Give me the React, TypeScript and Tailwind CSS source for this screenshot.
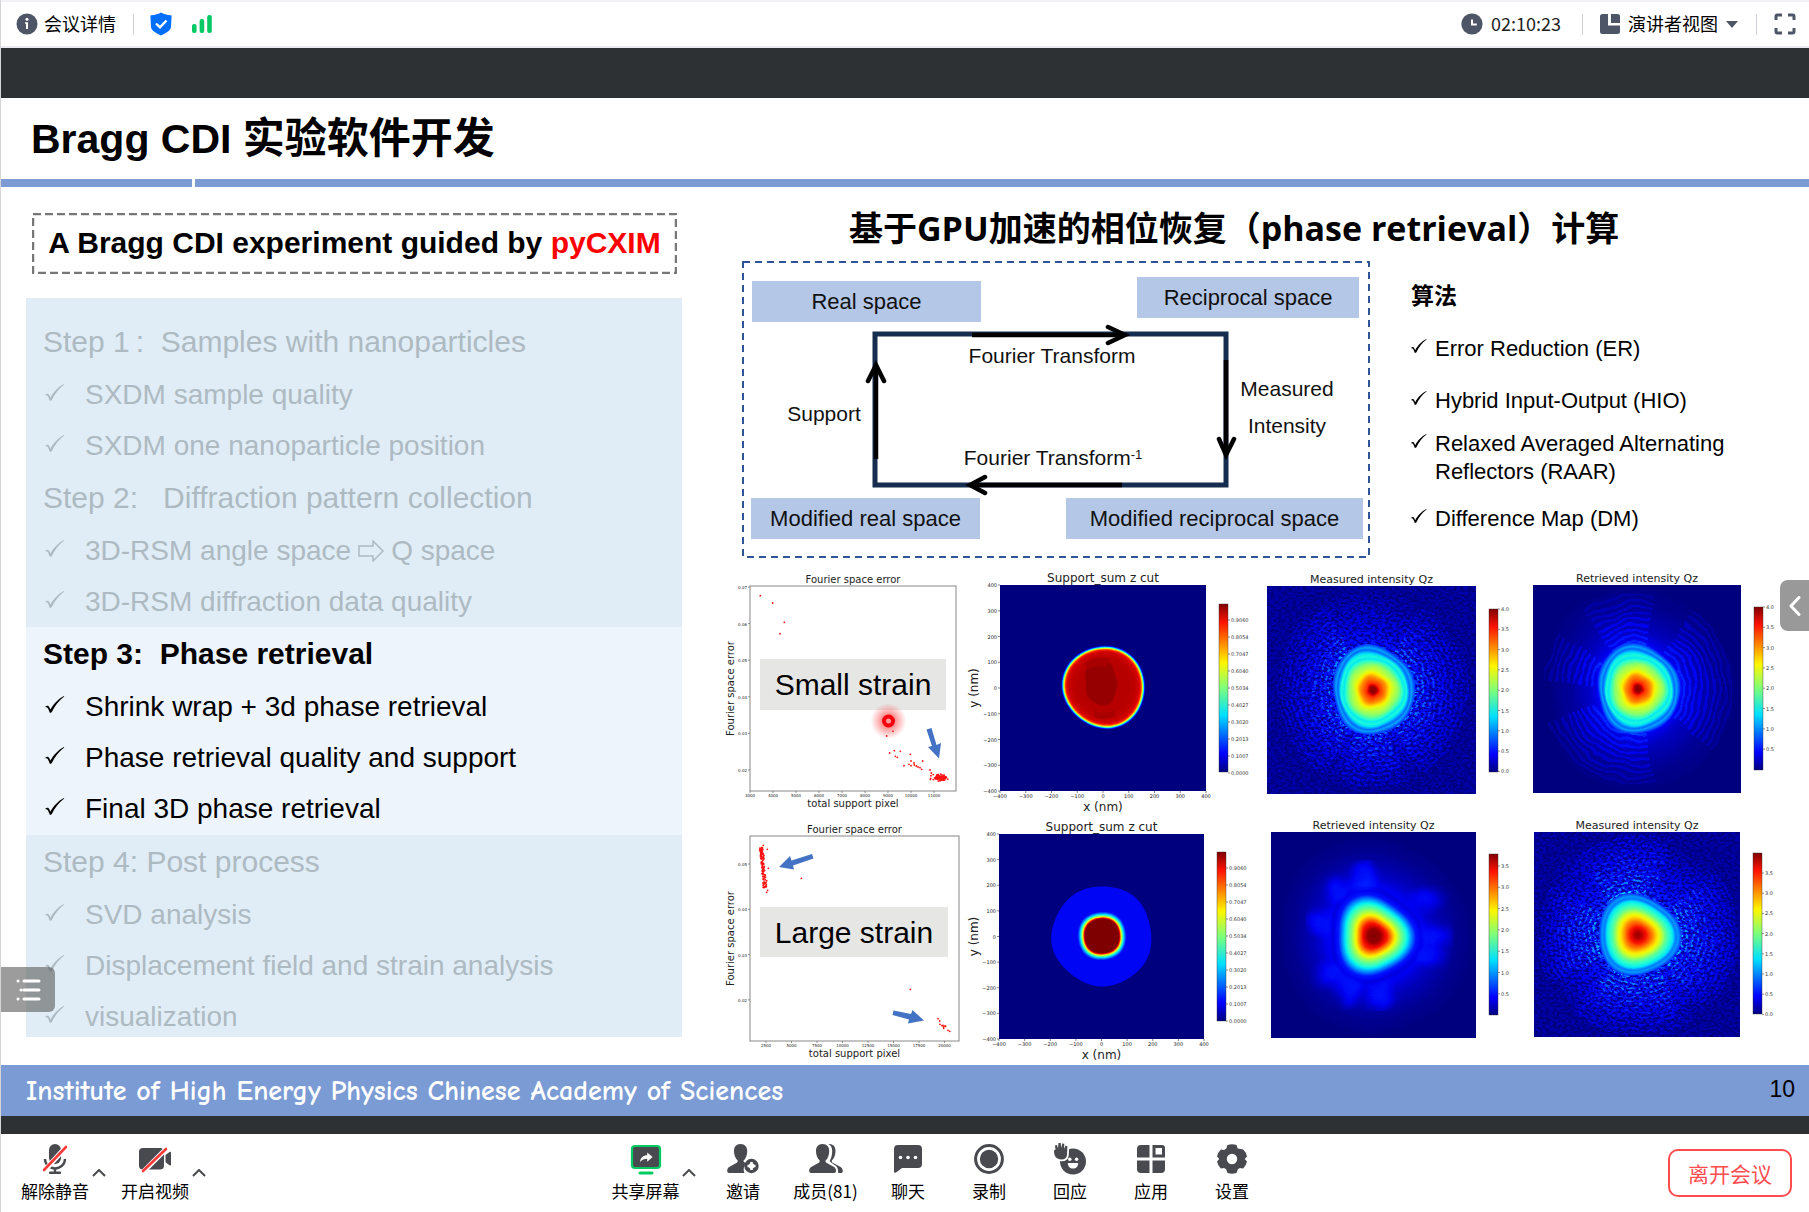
import React from "react";

/* ---------- numeric helpers ---------- */

type Stop = [number, number];

function makeRandom(seed: number) {
  let s = seed;
  return () => {
    s = (s * 1664525 + 1013904223) % 4294967296;
    return s / 4294967296;
  };
}

function valueAt(stops: Stop[], r: number) {
  for (let i = 1; i < stops.length; i++) {
    if (r <= stops[i][0]) {
      const [r0, v0] = stops[i - 1];
      const [r1, v1] = stops[i];
      return v0 + ((v1 - v0) * (r - r0)) / (r1 - r0);
    }
  }
  return stops[stops.length - 1][1];
}

type Harmonic = { n: number; amp: number; phase: number };

function blobPath(cx: number, cy: number, radius: number, harmonics: Harmonic[]) {
  const parts: string[] = [];
  for (let i = 0; i < 72; i++) {
    const t = (i / 72) * Math.PI * 2;
    let k = 1;
    for (const h of harmonics) k += h.amp * Math.cos(h.n * (t - h.phase));
    parts.push(
      `${i ? "L" : "M"}${(cx + radius * k * Math.cos(t)).toFixed(2)} ${(cy + radius * k * Math.sin(t)).toFixed(2)}`
    );
  }
  return parts.join("") + "Z";
}

function gray(v: number) {
  const c = Math.round(Math.max(0, Math.min(1, v)) * 255);
  return `rgb(${c},${c},${c})`;
}

/* ---------- icons ---------- */

const SLATE = "#4e5566";
const INK = "#484a4f";

function CheckMark({ className }: { className: string }) {
  return (
    <svg viewBox="0 0 16 14" className={className} fill="currentColor" aria-hidden="true">
      <path d="M0 8.900C.8 8.100 2 7.700 2.600 8.300 3.200 8.900 3.700 10 4.200 11.200 6.400 6.900 10.700 2.300 15.300 0L15.600.4C11.300 3.500 7.600 8.300 5.300 13.400L3.800 14C3.300 12.500 2.700 11 2.100 10 1.700 9.300 1 9.100.3 9.300Z" />
    </svg>
  );
}

function InfoIcon() {
  return (
    <svg viewBox="0 0 22 22" className="size-[22px]" aria-hidden="true">
      <circle cx="11" cy="11" r="10.500" fill={SLATE} />
      <circle cx="11" cy="6.300" r="1.500" fill="#fff" />
      <path d="M9 9.300h3v6.700h-2v-5.200H9z" fill="#fff" />
    </svg>
  );
}

function ShieldIcon() {
  return (
    <svg viewBox="0 0 22 24" className="h-6 w-[22px]" aria-hidden="true">
      <path d="M11 .5C13 1.900 17 3.100 21 3.300c.4 0 .6.300.6.700L21 15c-.2 3-4.500 6.200-10 8.500C5.500 21.200 1.200 18 1 15L.4 4c0-.4.2-.7.6-.7C5 3.100 9 1.900 11 .5Z" fill="#006fff" />
      <path d="M6 11.500l4 3.800 6.500-6.800" fill="none" stroke="#fff" strokeWidth="2.400" />
    </svg>
  );
}

function SignalIcon() {
  return (
    <svg viewBox="0 0 22 20" className="h-5 w-[22px]" aria-hidden="true" fill="#07c965">
      <rect x="1" y="10" width="4.600" height="9" rx="2" />
      <rect x="8.600" y="5" width="4.600" height="14" rx="2" />
      <rect x="16.200" y="1" width="4.600" height="18" rx="2" />
    </svg>
  );
}

function ClockIcon() {
  return (
    <svg viewBox="0 0 22 22" className="size-[22px]" aria-hidden="true">
      <circle cx="11" cy="11" r="10.600" fill={SLATE} />
      <path d="M11 6.500v5h4.800" fill="none" stroke="#fff" strokeWidth="2" />
    </svg>
  );
}

function LayoutIcon() {
  return (
    <svg viewBox="0 0 20 20" className="size-5" aria-hidden="true" fill={SLATE}>
      <path d="M2.500 0H8v11.500h12V17.500a2.500 2.500 0 0 1-2.500 2.500h-15A2.500 2.500 0 0 1 0 17.500v-15A2.500 2.500 0 0 1 2.500 0Z" />
      <path d="M11 0h6.500A2.500 2.500 0 0 1 20 2.500V9h-9Z" />
    </svg>
  );
}

function FullscreenIcon() {
  return (
    <svg viewBox="0 0 22 22" className="size-[22px]" aria-hidden="true" fill="none" stroke={SLATE} strokeWidth="3">
      <path d="M2 7V3.500Q2 2 3.500 2H8M14 2h4.500Q20 2 20 3.500V7M20 15v3.500q0 1.500-1.500 1.500H14M8 20H3.500Q2 20 2 18.500V15" />
    </svg>
  );
}

function MicOffIcon() {
  return (
    <svg viewBox="0 0 26 32" className="h-8 w-[26px]" aria-hidden="true">
      <rect x="7" y="1" width="12" height="20" rx="6" fill={INK} />
      <path d="M3 16a10 9.500 0 0 0 20 0M13 25.500v4" fill="none" stroke={INK} strokeWidth="2.400" />
      <rect x="7" y="28.400" width="12" height="2.600" rx="1" fill={INK} />
      <path d="M2 28L24 4" stroke="#fff" strokeWidth="5" />
      <path d="M2 27L24 4" stroke="#fe3b3b" strokeWidth="2.600" strokeLinecap="round" />
    </svg>
  );
}

function CameraOffIcon() {
  return (
    <svg viewBox="0 0 32 32" className="size-8" aria-hidden="true">
      <rect x="0" y="5" width="25" height="21.500" rx="4" fill={INK} />
      <path d="M26.500 12l4-3q1.500-.8 1.500.800v11.600q0 1.600-1.500.800l-4-3Z" fill={INK} />
      <path d="M3 30L27 6" stroke="#fff" strokeWidth="5" />
      <path d="M4 28L27 6" stroke="#fe3b3b" strokeWidth="2.600" strokeLinecap="round" />
    </svg>
  );
}

function ShareScreenIcon() {
  return (
    <svg viewBox="0 0 32 32" className="size-8" aria-hidden="true">
      <rect x="2" y="3" width="28" height="22" rx="3" fill={INK} stroke="#00cb62" strokeWidth="2.200" />
      <path d="M10 19c.4-4.600 3.400-6.800 7.200-6.800V9.400l5.400 4.700-5.400 4.700v-3c-3 0-5.200.7-7.200 3.200Z" fill="#fff" />
      <rect x="8.500" y="28.500" width="15" height="3" rx="1.500" fill="#00cb62" />
    </svg>
  );
}

function InviteIcon() {
  return (
    <svg viewBox="0 0 32 30" className="h-[30px] w-8" aria-hidden="true">
      <path d="M13.500 0C18 0 20.200 3 20.200 7c0 4.300-1.700 8-3.500 9.300-.5 1 0 1.700 1 2.200l1.800.9A9 9 0 0 0 17.300 29H2.200C.8 29 0 28 .2 26.500.4 24.500 1 23.500 3 22.500l6.300-3.500c1.200-.7 1.800-1.500 1.200-2.700C8.500 14.500 7 11.300 7 7c0-4 2-7 6.500-7Z" fill={INK} />
      <circle cx="24.500" cy="22" r="5" fill="none" stroke={INK} strokeWidth="4.400" />
      <path d="M24.500 18v8M20.500 22h8" stroke="#fff" strokeWidth="2.600" />
    </svg>
  );
}

function MembersIcon() {
  return (
    <svg viewBox="0 0 36 30" className="h-[30px] w-9" aria-hidden="true" fill={INK}>
      <path d="M14.500 0c4.500 0 6.700 3 6.700 7 0 4.300-1.700 8-3.500 9.300-.5 1.200 0 2 1.200 2.700l6.300 3.500c2 1 2.600 2 2.800 4 .2 1.500-.6 2.500-2 2.500H3.200C1.800 29 1 28 1.200 26.500c.2-2 .8-3 2.800-4l6.300-3.500c1.200-.7 1.800-1.500 1.200-2.700C9.500 14.500 8 11.300 8 7c0-4 2-7 6.500-7Z" />
      <path d="M20.500 0c4.500-.3 7 2.600 7 7 0 4.300-1.500 7.600-3.500 9.300-.5 1.200 0 2 1.200 2.700l6.500 3.500c2 1 2.800 2 3 4 .2 1.500-.2 2.500-1.800 2.500h-2.700c0-4.500-.8-6.500-3.700-8L22.500 18c-1-.5-1-1-.4-1.800C23.400 14 24.200 10.500 24.200 7c0-3.200-1.200-5.500-3.700-7Z" />
    </svg>
  );
}

function ChatIcon() {
  return (
    <svg viewBox="0 0 28 28" className="size-7" aria-hidden="true">
      <path d="M4 0h20a4 4 0 0 1 4 4v15a4 4 0 0 1-4 4H8l-6 4.500q-2 1-2-1V4a4 4 0 0 1 4-4Z" fill={INK} />
      <g fill="#fff">
        <circle cx="6.500" cy="12.500" r="1.800" />
        <circle cx="14" cy="12.500" r="1.800" />
        <circle cx="21.500" cy="12.500" r="1.800" />
      </g>
    </svg>
  );
}

function RecordIcon() {
  return (
    <svg viewBox="0 0 30 30" className="size-[30px]" aria-hidden="true">
      <circle cx="15" cy="15" r="13.400" fill="none" stroke={INK} strokeWidth="3" />
      <circle cx="15" cy="15" r="9.200" fill={INK} />
    </svg>
  );
}

function ReactIcon() {
  return (
    <svg viewBox="0 0 32 32" className="size-8" aria-hidden="true">
      <circle cx="19" cy="18.500" r="13" fill={INK} />
      <path d="M0 7.500L1.800 6.500 1 2.500 3 2 4 5.500 4.500 0h2.200L7.200 5 8.300.4l2 .4L10 6l1.600-3.500 1.800.7L13 12c-.3 3-2.500 4.500-5.500 4.500C2 16.500 0 13 0 7.500Z" fill={INK} stroke="#fff" strokeWidth="3.500" />
      <path d="M0 7.500L1.500 6.500 1 2.500 3 2 4 5.500 4.500 0h2.200L7.200 5 8.300.4l2 .4L10 6l1.600-3.500 1.800.7L13 12c-.3 3-2.500 4.500-5.500 4.500C2 16.500 0 13 0 7.500Z" fill={INK} />
      <circle cx="15.800" cy="16.300" r="1.700" fill="#fff" />
      <circle cx="22.600" cy="16.300" r="1.700" fill="#fff" />
      <path d="M13.800 20h10.400c0 3.500-2 5.500-5.200 5.500s-5.200-2-5.200-5.500Z" fill="#fff" />
    </svg>
  );
}

function AppsIcon() {
  return (
    <svg viewBox="0 0 28 28" className="size-7" aria-hidden="true" fill={INK}>
      <path d="M4 0h8.500v12.500H0V4a4 4 0 0 1 4-4Z" />
      <path d="M0 15.500h12.500V28H4a4 4 0 0 1-4-4Z" />
      <path d="M15.500 15.500H28V24a4 4 0 0 1-4 4h-8.500Z" />
      <path fillRule="evenodd" d="M15.500 0H25a3 3 0 0 1 3 3v9.500H15.500ZM18.500 3v6.500H25V3Z" />
    </svg>
  );
}

function SettingsIcon() {
  return (
    <svg viewBox="0 0 30 30" className="size-[30px]" aria-hidden="true">
      <path
        fillRule="evenodd"
        fill={INK}
        d="M10.500 1q4.500-1.400 9 0l1.200 3.600 3 .4 2.500.6Q29.600 8.800 30 12.500L27.700 15 30 17.500q-.8 4-3.800 7l-3.400-.4-2.100 1.300-1.200 3.600q-4.500 1.400-9 0l-1.200-3.600-2.100-1.300-3.400.4q-3-3-3.800-7L2.300 15 0 12.500q.8-4 3.800-7l3.400.4 2.100-1.300ZM15 9.800a5.200 5.200 0 1 0 0 10.400 5.200 5.200 0 0 0 0-10.400Z"
      />
    </svg>
  );
}

function ChevronUp() {
  return (
    <svg viewBox="0 0 14 8" className="h-2 w-3.5" aria-hidden="true">
      <path d="M1 7l6-6 6 6" fill="none" stroke={INK} strokeWidth="2" />
    </svg>
  );
}

/* ---------- meeting bars ---------- */

function TopBar() {
  return (
    <header className="flex h-12 items-center justify-between border-t-2 border-b-2 border-t-[#f1f2f6] border-b-[#e9ebf1] bg-white pl-[15px] pr-[13px] text-[18px] text-black">
      <div className="flex items-center">
        <button className="flex items-center gap-1.5">
          <InfoIcon />
          <span className="pb-0.5 leading-6">会议详情</span>
        </button>
        <span className="ml-[17px] mr-4 h-[21px] w-px bg-[#cfd1d6]" />
        <button aria-label="安全">
          <ShieldIcon />
        </button>
        <button aria-label="网络" className="ml-[19px]">
          <SignalIcon />
        </button>
      </div>
      <div className="flex items-center">
        <ClockIcon />
        <span className="ml-2 pb-0.5 leading-6 text-[#222]">02:10:23</span>
        <span className="ml-[21px] mr-[17px] h-[21px] w-px bg-[#cfd1d6]" />
        <button className="flex items-center">
          <LayoutIcon />
          <span className="ml-2 pb-0.5 leading-6">演讲者视图</span>
          <svg viewBox="0 0 12 7" className="ml-2 h-[7px] w-3" aria-hidden="true">
            <path d="M0 0h12L6 7Z" fill={SLATE} />
          </svg>
        </button>
        <span className="ml-[18px] mr-[17px] h-[21px] w-px bg-[#cfd1d6]" />
        <button aria-label="全屏">
          <FullscreenIcon />
        </button>
      </div>
    </header>
  );
}

function ToolButton({ label, width, children }: { label: string; width: string; children: React.ReactNode }) {
  return (
    <button className={`flex flex-col items-center ${width}`}>
      <span className="flex h-9 items-center justify-center">{children}</span>
      <span className="mt-0.5 mb-0.5 whitespace-nowrap text-[17px] leading-6">{label}</span>
    </button>
  );
}

function MoreButton({ label }: { label: string }) {
  return (
    <button aria-label={label} className="mb-5 flex h-6 w-[19px] items-center justify-center self-end">
      <ChevronUp />
    </button>
  );
}

function BottomBar() {
  return (
    <footer className="flex items-start justify-between bg-white pt-[7px] pb-[7px] pl-5 pr-[17px] text-black">
      <div className="flex">
        <ToolButton label="解除静音" width="w-[68px]">
          <MicOffIcon />
        </ToolButton>
        <MoreButton label="音频选项" />
        <div className="w-[13px]" />
        <ToolButton label="开启视频" width="w-[68px]">
          <CameraOffIcon />
        </ToolButton>
        <MoreButton label="视频选项" />
      </div>
      <div className="flex pl-2">
        <ToolButton label="共享屏幕" width="w-[68px]">
          <ShareScreenIcon />
        </ToolButton>
        <MoreButton label="共享选项" />
        <div className="w-1" />
        <ToolButton label="邀请" width="w-[81px]">
          <InviteIcon />
        </ToolButton>
        <ToolButton label="成员(81)" width="w-[84px]">
          <MembersIcon />
        </ToolButton>
        <ToolButton label="聊天" width="w-[81px]">
          <ChatIcon />
        </ToolButton>
        <ToolButton label="录制" width="w-[81px]">
          <RecordIcon />
        </ToolButton>
        <ToolButton label="回应" width="w-[81px]">
          <ReactIcon />
        </ToolButton>
        <ToolButton label="应用" width="w-[81px]">
          <AppsIcon />
        </ToolButton>
        <ToolButton label="设置" width="w-[81px]">
          <SettingsIcon />
        </ToolButton>
      </div>
      <button className="mt-2 h-12 rounded-[10px] border-2 border-[#ff4d4f] px-[18px] text-[21px] leading-6 text-[#ff4d4f]">
        离开会议
      </button>
    </footer>
  );
}

/* ---------- left column of the slide ---------- */

function StepHeading({ children, bold }: { children: React.ReactNode; bold?: boolean }) {
  return (
    <h3 className={`flex h-[54px] items-center whitespace-pre text-[30px] leading-9 ${bold ? "font-bold" : ""}`}>{children}</h3>
  );
}

function StepItem({ children }: { children: React.ReactNode }) {
  return (
    <li className="flex h-[51px] items-center whitespace-nowrap text-[28px] leading-9">
      <CheckMark className="mr-5 mb-1 ml-0.5 h-[17px] w-5 shrink-0" />
      {children}
    </li>
  );
}

function Steps() {
  return (
    <div className="mt-6 mr-10 ml-[25px] text-[#aebac2]">
      <section className="bg-[#e0edf6] pt-[17px] pl-[17px]">
        <StepHeading>{"Step 1\u2009:  Samples with nanoparticles"}</StepHeading>
        <ul>
          <StepItem>SXDM sample quality</StepItem>
          <StepItem>SXDM one nanoparticle position</StepItem>
        </ul>
        <StepHeading>{"Step 2:   Diffraction pattern collection"}</StepHeading>
        <ul>
          <StepItem>
            3D-RSM angle space
            <svg viewBox="0 0 26 22" className="mx-[7px] h-[22px] w-[26px]" aria-hidden="true">
              <path d="M1 6h14V1l10 10-10 10v-5H1Z" fill="none" stroke="currentColor" strokeWidth="1.500" />
            </svg>
            Q space
          </StepItem>
          <StepItem>3D-RSM diffraction data quality</StepItem>
        </ul>
      </section>
      <section className="bg-[#edf4fb] pb-px pl-[17px] text-black">
        <StepHeading bold>{"Step 3:  Phase retrieval"}</StepHeading>
        <ul>
          <StepItem>Shrink wrap + 3d phase retrieval</StepItem>
          <StepItem>Phase retrieval quality and support</StepItem>
          <StepItem>Final 3D phase retrieval</StepItem>
        </ul>
      </section>
      <section className="overflow-hidden bg-[#e0edf6] pl-[17px]">
        <StepHeading>Step 4: Post process</StepHeading>
        <ul className="-mb-[5px]">
          <StepItem>SVD analysis</StepItem>
          <StepItem>Displacement field and strain analysis</StepItem>
          <StepItem>visualization</StepItem>
        </ul>
      </section>
    </div>
  );
}

/* ---------- phase retrieval loop diagram ---------- */

function Node({ place, children }: { place: string; children: React.ReactNode }) {
  return (
    <div className={`absolute flex h-[41px] items-center justify-center bg-[#b4c7e7] text-[22px] leading-6 ${place}`}>{children}</div>
  );
}

function Caption({ place, children }: { place: string; children: React.ReactNode }) {
  return <div className={`absolute text-center text-[21px] leading-6 whitespace-nowrap ${place}`}>{children}</div>;
}

function LoopDiagram() {
  return (
    <div className="relative h-[297px] w-[628px] shrink-0 text-[#111]">
      <svg viewBox="742 261 628 297" className="absolute inset-0 size-full" aria-hidden="true" fill="none">
        <rect x="743" y="262" width="626" height="295" stroke="#2f5597" strokeWidth="2" strokeDasharray="7 5" />
        <rect x="875" y="334" width="351" height="151" stroke="#172d4f" strokeWidth="5" />
        <g stroke="#000" strokeWidth="4.500">
          <path d="M972 335H1124M1226 360V454M1122 485H971M876 459V366" />
          <g strokeLinecap="round">
            <path d="M1108 327L1125 335L1108 343M1219 439L1226 455L1234 439M985 477L970 485L985 493M868 381L876 365L884 381" />
          </g>
        </g>
      </svg>
      <Node place="left-[10px] top-[20px] w-[229px]">Real space</Node>
      <Node place="left-[395px] top-[16px] w-[222px]">Reciprocal space</Node>
      <Node place="left-[9px] top-[237px] w-[229px]">Modified real space</Node>
      <Node place="left-[324px] top-[237px] w-[297px]">Modified reciprocal space</Node>
      <Caption place="left-[210px] top-[83px] w-[200px]">Fourier Transform</Caption>
      <Caption place="left-[211px] top-[185px] w-[200px]">
        Fourier Transform<sup className="text-[13px]">-1</sup>
      </Caption>
      <Caption place="left-[40px] top-[141px] w-[84px]">Support</Caption>
      <Caption place="left-[495px] top-[116px] w-[100px]">Measured</Caption>
      <Caption place="left-[495px] top-[153px] w-[100px]">Intensity</Caption>
    </div>
  );
}

function Algorithms() {
  const item = "flex text-[22px] leading-7";
  const tick = "mt-1 mr-2 h-[14px] w-4 shrink-0";
  return (
    <div className="ml-[41px] pt-[19px] text-black">
      <h3 className="text-[23px] font-bold leading-8">算法</h3>
      <ul>
        <li className={`mt-[23px] ${item}`}>
          <CheckMark className={tick} />
          Error Reduction (ER)
        </li>
        <li className={`mt-6 ${item}`}>
          <CheckMark className={tick} />
          Hybrid Input-Output (HIO)
        </li>
        <li className={`mt-[15px] ${item}`}>
          <CheckMark className={tick} />
          <span>
            Relaxed Averaged Alternating
            <br />
            Reflectors (RAAR)
          </span>
        </li>
        <li className={`mt-[19px] ${item}`}>
          <CheckMark className={tick} />
          Difference Map (DM)
        </li>
      </ul>
    </div>
  );
}

/* ---------- plots ---------- */

const PLOT_FONT = '"DejaVu Sans", sans-serif';

function PlotDefs() {
  return (
    <svg className="absolute size-0" aria-hidden="true">
      <defs>
        <filter id="jet" x="0" y="0" width="1" height="1" colorInterpolationFilters="sRGB">
          <feGaussianBlur stdDeviation="0.700" edgeMode="duplicate" />
          <feComponentTransfer>
            <feFuncR type="table" tableValues="0 0 0 0 0 0 0 0 .16 .32 .48 .65 .81 .97 1 1 1 1 .95 .73 .5" />
            <feFuncG type="table" tableValues="0 0 0 .1 .3 .5 .7 .9 1 1 1 1 1 .96 .78 .59 .41 .22 .04 0 0" />
            <feFuncB type="table" tableValues=".5 .73 .95 1 1 1 1 .97 .81 .65 .48 .32 .16 0 0 0 0 0 0 0 0" />
          </feComponentTransfer>
        </filter>
        <filter id="grain" x="0" y="0" width="1" height="1" colorInterpolationFilters="sRGB">
          <feTurbulence type="fractalNoise" baseFrequency="0.280 0.400" numOctaves="2" seed="7" result="n" />
          <feColorMatrix in="n" type="matrix" values="4 0 0 0 -1.450 4 0 0 0 -1.450 4 0 0 0 -1.450 0 0 0 0 1" result="g" />
          <feComposite in="SourceGraphic" in2="g" operator="arithmetic" k1="0.950" k2="0.250" k3="0.025" k4="-0.010" />
        </filter>
        <filter id="warp" x="0" y="0" width="1" height="1" colorInterpolationFilters="sRGB">
          <feTurbulence type="fractalNoise" baseFrequency="0.045" numOctaves="2" seed="3" result="n" />
          <feDisplacementMap in="SourceGraphic" in2="n" scale="9" xChannelSelector="R" yChannelSelector="G" />
        </filter>
        <filter id="soften" x="-0.200" y="-0.200" width="1.400" height="1.400">
          <feGaussianBlur stdDeviation="6" />
        </filter>
        <linearGradient id="jetBar" x1="0" y1="1" x2="0" y2="0">
          <stop offset="0" stopColor="#000080" />
          <stop offset="0.110" stopColor="#0000ff" />
          <stop offset="0.340" stopColor="#00e0ff" />
          <stop offset="0.500" stopColor="#7dff7a" />
          <stop offset="0.650" stopColor="#fff600" />
          <stop offset="0.890" stopColor="#ff1300" />
          <stop offset="1" stopColor="#800000" />
        </linearGradient>
        <radialGradient id="pointerGlow">
          <stop offset="0.300" stopColor="#ff2020" stopOpacity="0.550" />
          <stop offset="1" stopColor="#ff4040" stopOpacity="0" />
        </radialGradient>
      </defs>
    </svg>
  );
}

type Box = { x: number; y: number; w: number; h: number };

function ColorBar({ x, y, h, ticks }: { x: number; y: number; h: number; ticks: { y: number; t: string }[] }) {
  return (
    <g>
      <rect x={x} y={y} width="9" height={h} fill="url(#jetBar)" stroke="#333" strokeWidth="0.400" />
      {ticks.map((k) => (
        <g key={k.t}>
          <path d={`M${x + 9} ${k.y}h2`} stroke="#444" strokeWidth="0.600" />
          <text x={x + 12} y={k.y + 2} fontSize="5" fill="#333">
            {k.t}
          </text>
        </g>
      ))}
    </g>
  );
}

function ScatterPlot({
  view, frame, titleY, xTicks, yTicks, points, label, labelBox, children,
}: {
  view: string;
  frame: Box;
  titleY: number;
  xTicks: { x: number; t: string }[];
  yTicks: { y: number; t: string }[];
  points: [number, number][];
  label: string;
  labelBox: Box;
  children?: React.ReactNode;
}) {
  const cx = frame.x + frame.w / 2;
  const bottom = frame.y + frame.h;
  return (
    <svg viewBox={view} className="block h-auto w-full" fontFamily={PLOT_FONT} fill="#222">
      <text x={cx} y={titleY} fontSize="10" textAnchor="middle">Fourier space error</text>
      <rect x={frame.x} y={frame.y} width={frame.w} height={frame.h} fill="none" stroke="#888" strokeWidth="1" />
      {xTicks.map((k) => (
        <g key={k.t}>
          <path d={`M${k.x} ${bottom}v2`} stroke="#555" strokeWidth="0.600" />
          <text x={k.x} y={bottom + 6} fontSize="4" textAnchor="middle">{k.t}</text>
        </g>
      ))}
      {yTicks.map((k) => (
        <g key={k.t}>
          <path d={`M${frame.x - 2} ${k.y}h2`} stroke="#555" strokeWidth="0.600" />
          <text x={frame.x - 3} y={k.y + 2} fontSize="4" textAnchor="end">{k.t}</text>
        </g>
      ))}
      <text x={cx} y={bottom + 16} fontSize="10" textAnchor="middle">total support pixel</text>
      <text transform={`translate(734 ${frame.y + frame.h / 2}) rotate(-90)`} fontSize="10" textAnchor="middle">
        Fourier space error
      </text>
      <g fill="#ff1010">
        {points.map(([x, y], i) => (
          <circle key={i} cx={x} cy={y} r="0.900" />
        ))}
      </g>
      <rect x={labelBox.x} y={labelBox.y} width={labelBox.w} height={labelBox.h} fill="#e6e6e5" />
      <text
        x={labelBox.x + labelBox.w / 2}
        y={labelBox.y + 36}
        fontSize="30"
        textAnchor="middle"
        fontFamily={'"Liberation Sans", Arial, sans-serif'}
        fill="#000"
      >
        {label}
      </text>
      {children}
    </svg>
  );
}

const BAR_VALUES = ["0.9060", "0.8054", "0.7047", "0.6040", "0.5034", "0.4027", "0.3020", "0.2013", "0.1007", "0.0000"];
const AXIS_VALUES = [-400, -300, -200, -100, 0, 100, 200, 300, 400];

function SupportPlot({ view, frame, bar, children }: { view: string; frame: Box; bar: { x: number; y: number; h: number }; children: React.ReactNode }) {
  const bottom = frame.y + frame.h;
  return (
    <svg viewBox={view} className="block h-auto w-full" fontFamily={PLOT_FONT} fill="#222">
      <g filter="url(#jet)">
        <rect x={frame.x} y={frame.y} width={frame.w} height={frame.h} fill="#000" />
        {children}
      </g>
      <text x={frame.x + frame.w / 2} y={frame.y - 3} fontSize="12" textAnchor="middle">Support_sum z cut</text>
      {AXIS_VALUES.map((v, i) => (
        <g key={v}>
          <path d={`M${frame.x + (frame.w * i) / 8} ${bottom}v2M${frame.x - 2} ${bottom - (frame.h * i) / 8}h2`} stroke="#333" strokeWidth="0.600" />
          <text x={frame.x + (frame.w * i) / 8} y={bottom + 7} fontSize="5" textAnchor="middle">{String(v).replace("-", "−")}</text>
          <text x={frame.x - 3} y={bottom - (frame.h * i) / 8 + 2} fontSize="5" textAnchor="end">{String(v).replace("-", "−")}</text>
        </g>
      ))}
      <text x={frame.x + frame.w / 2} y={bottom + 20} fontSize="12" textAnchor="middle">x (nm)</text>
      <text transform={`translate(978 ${frame.y + frame.h / 2}) rotate(-90)`} fontSize="12" textAnchor="middle">y (nm)</text>
      <ColorBar x={bar.x} y={bar.y} h={bar.h} ticks={BAR_VALUES.map((t, i) => ({ t, y: bar.y + 16 + i * 17 }))} />
    </svg>
  );
}

function Levels({ cx, cy, from, to, step, stops, shape }: { cx: number; cy: number; from: number; to: number; step: number; stops: Stop[]; shape: (r: number) => Harmonic[] }) {
  const radii: number[] = [];
  for (let r = from; r >= to; r -= step) radii.push(r);
  return (
    <>
      {radii.map((r) => (
        <path key={r} d={blobPath(cx, cy, r, shape(r))} fill={gray(valueAt(stops, r))} />
      ))}
    </>
  );
}

function Arcs({ cx, cy, start, end, gap, opacity, spans }: { cx: number; cy: number; start: number; end: number; gap: number; opacity: number; spans: [number, number][] }) {
  const out: React.ReactNode[] = [];
  for (let r = start; r < end; r += gap) {
    for (const [a, b] of spans) {
      const p = (deg: number) => `${(cx + r * Math.cos((deg * Math.PI) / 180)).toFixed(1)} ${(cy + r * Math.sin((deg * Math.PI) / 180)).toFixed(1)}`;
      out.push(
        <path
          key={`${r}-${a}`}
          d={`M${p(a)}A${r} ${r} 0 ${b - a > 180 ? 1 : 0} 1 ${p(b)}`}
          stroke="#fff"
          strokeWidth={gap * 0.45}
          strokeOpacity={opacity * (1 - (0.7 * (r - start)) / (end - start))}
          fill="none"
        />
      );
    }
  }
  return <>{out}</>;
}

function IntensityPlot({
  id, view, frame, title, center, stops, shape, coreRadius, grain, arcs, bar, ticks,
}: {
  id: string;
  view: string;
  frame: Box;
  title: string;
  center: [number, number];
  stops: Stop[];
  shape: (r: number) => Harmonic[];
  coreRadius: number;
  grain: boolean;
  arcs: React.ReactNode;
  bar: { x: number; y: number; h: number };
  ticks: { y: number; t: string }[];
}) {
  const [cx, cy] = center;
  return (
    <svg viewBox={view} className="block h-auto w-full" fontFamily={PLOT_FONT} fill="#222">
      <clipPath id={id}>
        <rect x={frame.x} y={frame.y} width={frame.w} height={frame.h} />
      </clipPath>
      <g clipPath={`url(#${id})`}>
        <g filter="url(#jet)">
          <rect x={frame.x} y={frame.y} width={frame.w} height={frame.h} fill="#000" />
          <g filter={grain ? "url(#grain)" : undefined}>
            <rect x={frame.x} y={frame.y} width={frame.w} height={frame.h} fill={gray(grain ? 0.02 : 0)} />
            <Levels cx={cx} cy={cy} from={103} to={coreRadius - 6} step={1.5} stops={stops} shape={shape} />
            <g filter="url(#warp)">{arcs}</g>
          </g>
          <Levels cx={cx} cy={cy} from={coreRadius} to={1} step={0.75} stops={stops} shape={shape} />
        </g>
      </g>
      <text x={frame.x + frame.w / 2} y={frame.y - 3} fontSize="11" textAnchor="middle">{title}</text>
      <ColorBar x={bar.x} y={bar.y} h={bar.h} ticks={ticks} />
    </svg>
  );
}

const at1 = (x: number, y: number): [number, number] => [715 + x / 3, 565 + y / 3];
const at2 = (x: number, y: number): [number, number] => [715 + x / 3, 815 + y / 3];

function smallStrainPoints() {
  const rnd = makeRandom(11);
  const pts = [
    [136, 92], [173, 114], [208, 172], [195, 206], [534, 499], [515, 513], [524, 564], [538, 557], [556, 559], [586, 568],
    [541, 574], [547, 577], [588, 588], [623, 588], [567, 602], [582, 598], [588, 602], [597, 594], [598, 600], [604, 603],
    [609, 606], [615, 608], [620, 613], [645, 615], [649, 624], [648, 632], [647, 640], [646, 643],
  ].map(([x, y]) => at1(x, y));
  for (let i = 0; i < 80; i++) {
    const dx = (rnd() + rnd() - 1) * 24;
    const dy = (rnd() + rnd() - 1) * 11;
    pts.push(at1(677 + dx, 638 + dy));
  }
  return pts;
}

function largeStrainPoints() {
  const rnd = makeRandom(5);
  const pts = [
    [145, 91], [157, 103], [134, 105], [160, 160], [259, 190], [155, 197], [158, 226], [155, 232], [586, 523], [669, 611], [674, 618],
    [675, 628], [681, 632], [684, 631], [690, 633], [686, 640], [692, 634], [686, 636], [699, 646], [704, 649],
  ].map(([x, y]) => at2(x, y));
  for (let i = 0; i < 110; i++) {
    const t = rnd();
    pts.push(at2(139 + t * 11 + (rnd() - 0.5) * 11, 97 + t * 122));
  }
  return pts;
}

const scale = (values: string[], start: number, step: number) => values.map((t, i) => ({ t, y: start + i * step }));

function Figures() {
  const triangle = (amp: number, phase: number) => (r: number): Harmonic[] => [
    { n: 3, amp: r < 12 ? amp * 0.4 : r > 60 ? 0.02 : amp, phase },
    { n: 2, amp: 0.02, phase: 0.6 },
    { n: 7, amp: r > 46 ? 0.03 : 0, phase: 0.3 },
  ];
  const round = (r: number): Harmonic[] => [
    { n: 2, amp: r > 34 ? 0.05 : 0.02, phase: 1.4 },
    { n: 3, amp: 0.035, phase: 2.1 },
    { n: 5, amp: r > 24 ? 0.015 : 0.03, phase: r * 0.05 },
  ];
  const lobes = (r: number): Harmonic[] => [
    { n: 3, amp: r < 12 ? 0.02 : r > 48 ? 0.02 : 0.08, phase: 0.05 },
    { n: 2, amp: 0.02, phase: 1.2 },
  ];
  const ringed: Stop[] = [
    [0, 1], [4, 0.97], [7, 0.86], [13, 0.76], [16, 0.68], [19, 0.61], [25, 0.52], [28, 0.44], [31, 0.36],
    [34, 0.39], [36, 0.31], [38, 0.23], [40, 0.29], [42, 0.22], [45, 0.12], [60, 0.08], [80, 0.045], [103, 0.015],
  ];
  const halo: [number, number, number, number][] = [
    [1363, 876, 11, 16], [1429, 898, 14, 9], [1437, 936, 16, 8], [1431, 956, 14, 8],
    [1381, 999, 12, 12], [1349, 991, 9, 15], [1328, 975, 12, 9], [1318, 922, 12, 9], [1336, 888, 10, 10],
  ];
  return (
    <div className="relative pr-[33px]">
      <PlotDefs />
      <div className="grid grid-cols-[244fr_290fr_264fr_256fr]">
        <ScatterPlot
          view="722 570 244 250"
          frame={{ x: 750, y: 586, w: 206, h: 205 }}
          titleY={583}
          xTicks={[3000, 4000, 5000, 6000, 7000, 8000, 9000, 10000, 11000].map((t, i) => ({ t: String(t), x: 750 + i * 23 }))}
          yTicks={["0.07", "0.06", "0.05", "0.04", "0.03", "0.02"].map((t, i) => ({ t, y: 587 + i * 36.6 }))}
          points={smallStrainPoints()}
          label="Small strain"
          labelBox={{ x: 760, y: 659, w: 186, h: 51 }}
        >
          <circle cx="888.500" cy="721" r="18" fill="url(#pointerGlow)" />
          <circle cx="888.500" cy="721" r="4.500" fill="#ff9a9a" stroke="#f5000c" strokeWidth="4" />
          <path d="M926.500 729.500L931.500 728L936.500 745L941 743L939 758.500L928 747L932 746Z" fill="#4472c4" />
        </ScatterPlot>
        <SupportPlot view="966 570 290 250" frame={{ x: 1000, y: 585, w: 206, h: 206 }} bar={{ x: 1219, y: 604, h: 168 }}>
          <Levels
            cx={1104}
            cy={687}
            from={42}
            to={20}
            step={0.5}
            stops={[[0, 0.96], [30, 0.95], [36, 0.93], [38, 0.86], [39.5, 0.6], [41, 0.25], [42, 0.05]]}
            shape={() => [{ n: 2, amp: 0.015, phase: 0.7 }, { n: 3, amp: 0.02, phase: 1.2 }]}
          />
          <path d={blobPath(1101, 683, 19, [{ n: 2, amp: 0.18, phase: 1.5 }, { n: 5, amp: 0.04, phase: 0 }])} fill={gray(0.98)} />
          <path d="M1084 664q12-10 26-5l-4 8q-10-3-18 2ZM1094 710q10 6 20 0l2 6q-12 6-22 1Z" fill={gray(0.965)} />
        </SupportPlot>
        <IntensityPlot
          id="clip-a"
          view="1256 570 264 250"
          frame={{ x: 1267, y: 586, w: 209, h: 208 }}
          title="Measured intensity Qz"
          center={[1373, 690]}
          stops={ringed}
          shape={round}
          coreRadius={43}
          grain
          arcs={<Arcs cx={1373} cy={690} start={45} end={100} gap={5} opacity={0.1} spans={[[-60, 60], [120, 240], [70, 110]]} />}
          bar={{ x: 1489, y: 609, h: 163 }}
          ticks={scale(["4.0", "3.5", "3.0", "2.5", "2.0", "1.5", "1.0", "0.5", "0.0"], 609, 20.3)}
        />
        <IntensityPlot
          id="clip-b"
          view="1520 570 256 250"
          frame={{ x: 1533, y: 585, w: 208, h: 208 }}
          title="Retrieved intensity Qz"
          center={[1638, 689]}
          stops={[...ringed.slice(0, 14), [45, 0.1], [55, 0.06], [75, 0.025], [103, 0]] as Stop[]}
          shape={round}
          coreRadius={43}
          grain={false}
          arcs={<Arcs cx={1638} cy={689} start={46} end={98} gap={6} opacity={0.08} spans={[[-55, 40], [80, 160], [185, 215], [235, 280]]} />}
          bar={{ x: 1754, y: 607, h: 163 }}
          ticks={scale(["4.0", "3.5", "3.0", "2.5", "2.0", "1.5", "1.0", "0.5"], 607, 20.3)}
        />
        <ScatterPlot
          view="722 820 244 245"
          frame={{ x: 750, y: 836, w: 209, h: 205 }}
          titleY={833}
          xTicks={[2500, 5000, 7500, 10000, 12500, 15000, 17500, 20000].map((t, i) => ({ t: String(t), x: 766 + i * 25.5 }))}
          yTicks={["0.05", "0.04", "0.03", "0.02"].map((t, i) => ({ t, y: 864 + i * 45.3 }))}
          points={largeStrainPoints()}
          label="Large strain"
          labelBox={{ x: 760, y: 907, w: 188, h: 50 }}
        >
          <path d="M812 854L813.500 858.500L793 865.500L794 869.500L779 867L790 856L791.500 860.500Z" fill="#4472c4" />
          <path d="M893.500 1010.500L892.500 1015L909 1019.500L908 1023.500L924 1020.500L912.500 1010L911 1014Z" fill="#4472c4" />
        </ScatterPlot>
        <SupportPlot view="966 820 290 245" frame={{ x: 999, y: 834, w: 205, h: 205 }} bar={{ x: 1217, y: 852, h: 169 }}>
          <path d={blobPath(1102, 936, 50, [{ n: 5, amp: 0.012, phase: 0.4 }, { n: 3, amp: 0.01, phase: 1 }])} fill={gray(0.11)} />
          <Levels
            cx={1102}
            cy={936}
            from={25}
            to={16}
            step={0.5}
            stops={[[0, 1], [17.5, 1], [18.5, 0.9], [20, 0.6], [22, 0.36], [25, 0.13]]}
            shape={() => [{ n: 4, amp: 0.02, phase: 0.7 }]}
          />
        </SupportPlot>
        <IntensityPlot
          id="clip-c"
          view="1256 820 264 245"
          frame={{ x: 1271, y: 832, w: 205, h: 206 }}
          title="Retrieved intensity Qz"
          center={[1374, 936]}
          stops={[[0, 1], [7, 0.98], [13, 0.88], [18, 0.72], [22, 0.6], [27, 0.47], [32, 0.36], [36, 0.25], [40, 0.14], [46, 0.085], [50, 0.1], [58, 0.065], [72, 0.035], [85, 0.015], [103, 0]]}
          shape={lobes}
          coreRadius={44}
          grain={false}
          arcs={
            <g filter="url(#soften)">
              {halo.map(([x, y, rx, ry]) => (
                <ellipse key={`${x}-${y}`} cx={x} cy={y} rx={rx} ry={ry} fill="#fff" fillOpacity="0.090" />
              ))}
            </g>
          }
          bar={{ x: 1489, y: 854, h: 161 }}
          ticks={scale(["3.5", "3.0", "2.5", "2.0", "1.5", "1.0", "0.5"], 866, 21.3)}
        />
        <IntensityPlot
          id="clip-d"
          view="1520 820 256 245"
          frame={{ x: 1534, y: 832, w: 206, h: 205 }}
          title="Measured intensity Qz"
          center={[1638, 935]}
          stops={[[0, 0.99], [4, 0.95], [9, 0.88], [14, 0.77], [18, 0.68], [22, 0.6], [26, 0.48], [30, 0.4], [33, 0.36], [36, 0.24], [38, 0.28], [41, 0.19], [45, 0.13], [62, 0.1], [85, 0.055], [103, 0.02]]}
          shape={triangle(0.06, 0.05)}
          coreRadius={41}
          grain
          arcs={<Arcs cx={1638} cy={935} start={44} end={100} gap={5} opacity={0.11} spans={[[-40, 50], [60, 130], [150, 210], [230, 290]]} />}
          bar={{ x: 1753, y: 853, h: 161 }}
          ticks={scale(["3.5", "3.0", "2.5", "2.0", "1.5", "1.0", "0.5", "0.0"], 873, 20.2)}
        />
      </div>
    </div>
  );
}

/* ---------- slide ---------- */

function Slide() {
  return (
    <main className="relative flex grow flex-col bg-white font-['Liberation_Sans','Noto_Sans_CJK_SC',sans-serif]">
      <h1 className="pt-[17px] pb-[16px] pl-[30px] text-[41px] leading-[48px] font-bold text-black">
        Bragg CDI <span className="text-[42px]">实验软件开发</span>
      </h1>
      <div className="flex h-2 gap-[3px]">
        <div className="w-[191px] bg-[#7b9bd5]" />
        <div className="grow bg-[#7b9bd5]" />
      </div>
      <div className="grid grow grid-cols-[721fr_1087fr]">
        <div className="pt-[26px]">
          <div className="relative ml-[31px] flex h-[61px] w-[645px] items-center justify-center">
            <svg className="absolute inset-0 size-full" aria-hidden="true">
              <rect x="1" y="1" width="643" height="59" fill="none" stroke="#777" strokeWidth="2.500" strokeDasharray="8 4" />
            </svg>
            <h2 className="pb-0.5 text-[30px] leading-9 font-bold whitespace-nowrap text-black">
              A Bragg CDI experiment guided by <span className="text-[#ff0000]">pyCXIM</span>
            </h2>
          </div>
          <Steps />
        </div>
        <div>
          <h2 className="mt-[18px] ml-[127px] font-['Open_Sans','Noto_Sans_CJK_SC',sans-serif] text-[34px] leading-[46px] font-bold whitespace-nowrap text-black">
            基于GPU加速的相位恢复（phase retrieval）计算
          </h2>
          <div className="mt-[10px] mb-3 ml-5 flex">
            <LoopDiagram />
            <Algorithms />
          </div>
          <Figures />
        </div>
      </div>
      <div className="flex h-[51px] items-center justify-between bg-[#7b9bd5] pr-[14px] pl-[25px]">
        <p className="font-['Comic_Sans_MS','Comic_Neue','Noto_Sans',sans-serif] text-[28px] leading-9 font-bold text-white">
          Institute of High Energy Physics Chinese Academy of Sciences
        </p>
        <span className="pb-1 text-[23px] leading-8 text-black">10</span>
      </div>
      <button aria-label="目录" className="absolute top-[869px] left-0 flex h-[45px] w-[54px] items-center justify-center rounded-r-md bg-[#5a5a5a]/60">
        <svg viewBox="0 0 26 24" className="h-6 w-[26px]" aria-hidden="true" stroke="#fff" strokeWidth="3" strokeLinecap="round">
          <path d="M9 3h15M9 12h15M9 21h15M3 3h.1M6 12h.1M3 21h.1" />
        </svg>
      </button>
      <button aria-label="展开" className="absolute top-[482px] right-0 flex h-[51px] w-[29px] items-center justify-center rounded-l-lg bg-[#999]">
        <svg viewBox="0 0 12 20" className="h-5 w-3" aria-hidden="true">
          <path d="M10 1.500L2 10l8 8.500" fill="none" stroke="#fff" strokeWidth="3" strokeLinecap="round" strokeLinejoin="round" />
        </svg>
      </button>
    </main>
  );
}

export default function App() {
  return (
    <div className="flex min-h-screen w-full flex-col overflow-x-hidden border-l border-[#d5d5d8] bg-[#2d3033] font-['Noto_Sans_CJK_SC',sans-serif]">
      <TopBar />
      <div className="h-[50px] bg-[#2d3134]" />
      <Slide />
      <div className="h-[18px] bg-[#2d3134]" />
      <BottomBar />
    </div>
  );
}
